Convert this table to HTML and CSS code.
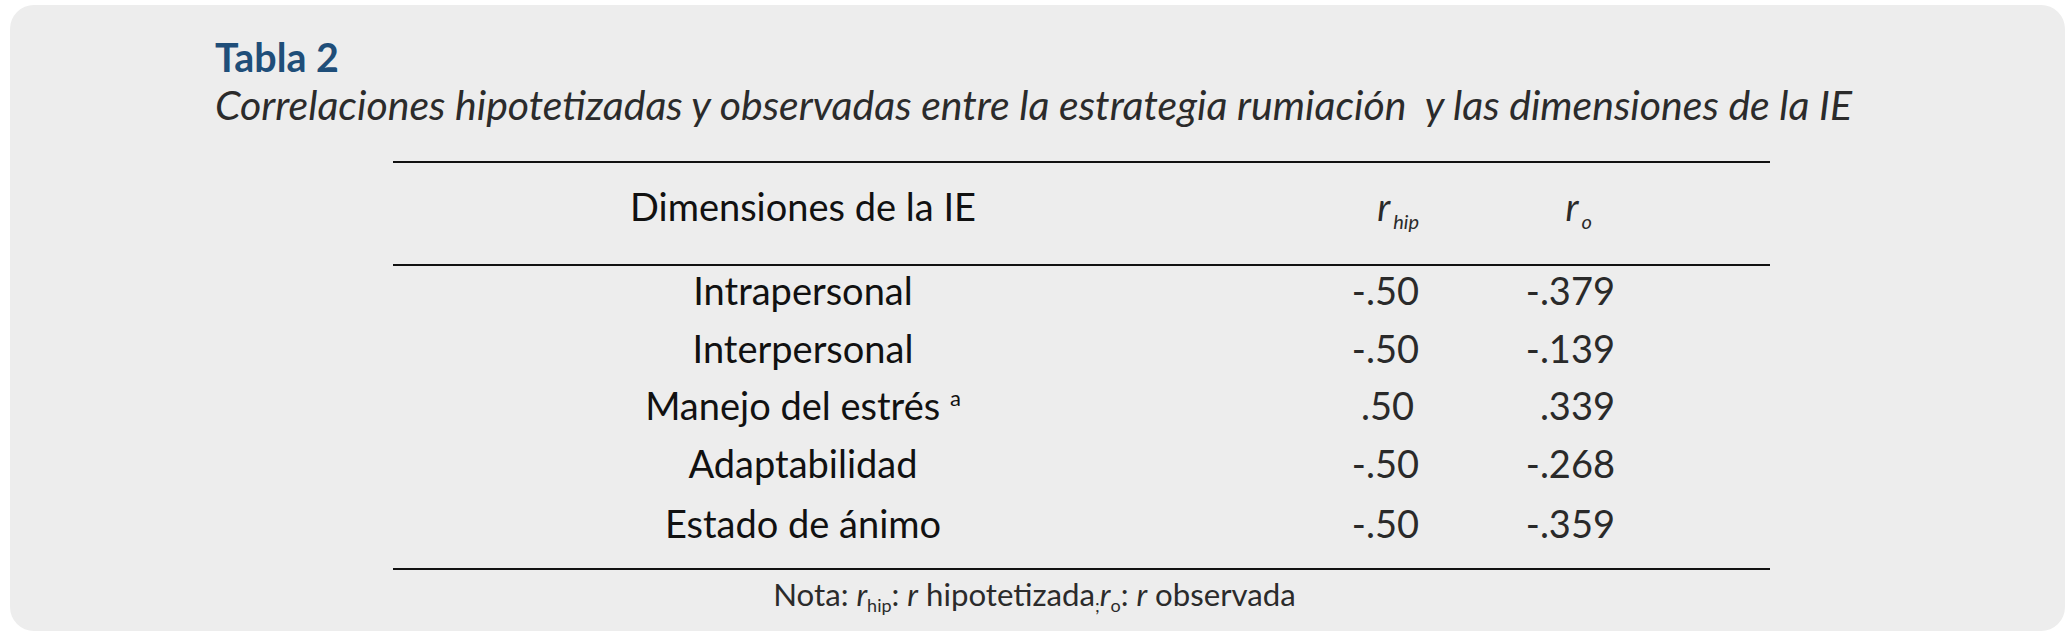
FILE: index.html
```html
<!DOCTYPE html>
<html lang="es">
<head>
<meta charset="utf-8">
<title>Tabla 2</title>
<link rel="stylesheet" href="styles.css">
</head>
<body>
<div class="card">
  <div class="caption">
    <div class="label">Tabla 2</div>
    <div class="title">Correlaciones hipotetizadas y observadas entre la estrategia rumiación&nbsp; y las dimensiones de la IE</div>
  </div>
  <div class="table">
    <div class="row head">
      <div class="cell dim">Dimensiones de la IE</div>
      <div class="cell num"><span class="r">r</span><span class="sub">hip</span></div>
      <div class="cell num ro"><span class="r">r</span><span class="sub">o</span></div>
    </div>
    <div class="body">
      <div class="row">
        <div class="cell dim">Intrapersonal</div>
        <div class="cell num">-.50</div>
        <div class="cell num">-.379</div>
      </div>
      <div class="row">
        <div class="cell dim">Interpersonal</div>
        <div class="cell num">-.50</div>
        <div class="cell num">-.139</div>
      </div>
      <div class="row">
        <div class="cell dim">Manejo del estrés <sup class="note">a</sup></div>
        <div class="cell num pos">.50</div>
        <div class="cell num">.339</div>
      </div>
      <div class="row">
        <div class="cell dim">Adaptabilidad</div>
        <div class="cell num">-.50</div>
        <div class="cell num">-.268</div>
      </div>
      <div class="row last">
        <div class="cell dim">Estado de ánimo</div>
        <div class="cell num">-.50</div>
        <div class="cell num">-.359</div>
      </div>
    </div>
  </div>
  <div class="nota">Nota: <i>r</i><sub class="ns">hip</sub>: <i>r</i> hipotetizada<sub class="ns">;</sub><i>r</i><sub class="ns">o</sub>: <i>r</i> observada</div>
</div>
</body>
</html>
```

FILE: styles.css
```css
html, body {
  margin: 0;
  padding: 0;
  background: #ffffff;
}

body {
  font-family: "Lato", "Open Sans", sans-serif;
  color: #1a1a1a;
}

.card {
  margin: 5px 6px 0 10px;
  height: 626px;
  box-sizing: border-box;
  background: #ededed;
  border-radius: 24px;
  padding-top: 30px;
  display: flex;
  flex-direction: column;
}

.caption {
  padding-left: 205px;
}

.label {
  font-weight: 700;
  font-size: 39.4px;
  line-height: 44px;
  color: #1f4e79;
}

.title {
  margin-top: 2px;
  font-style: italic;
  font-size: 41px;
  line-height: 48px;
  color: #2b2b2b;
  white-space: nowrap;
}

.table {
  margin-top: 32px;
  margin-left: 383px;
  width: 1377px;
  border-top: 2px solid #111;
  border-bottom: 2px solid #111;
}

.row {
  display: grid;
  grid-template-columns: 820px 206px 196px 1fr;
  font-size: 38px;
  line-height: 57.5px;
  color: #111;
}

.row.head {
  height: 103px;
  box-sizing: border-box;
  padding-bottom: 14px;
  align-items: center;
  border-bottom: 2px solid #111;
}

.body {
  margin-top: -4px;
  padding-bottom: 14px;
}

.row.last {
  line-height: 62px;
}

.cell.dim {
  text-align: center;
}

.cell.num {
  text-align: right;
  color: #2a2a2a;
}

.cell.num.pos {
  padding-right: 5px;
}

.head .cell.ro {
  padding-right: 23px;
}

.r {
  font-style: italic;
}

.sub {
  font-style: italic;
  font-size: 20px;
  vertical-align: -8px;
  line-height: 0;
  margin-left: 3px;
}

.note {
  font-size: 22px;
  vertical-align: 14px;
  line-height: 0;
}

.nota {
  margin-top: 4px;
  text-align: center;
  font-size: 31.2px;
  line-height: 40px;
  color: #2b2b2b;
  padding-right: 6px;
}

.ns {
  font-size: 18px;
  vertical-align: -6px;
  line-height: 0;
}
```
